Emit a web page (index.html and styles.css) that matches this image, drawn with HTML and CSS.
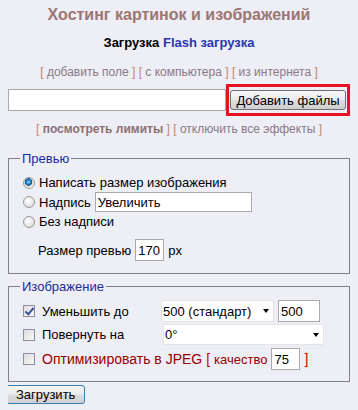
FILE: index.html
```html
<!DOCTYPE html>
<html lang="ru">
<head>
  <meta charset="UTF-8">
  <title>Хостинг картинок и изображений</title>
  <link rel="stylesheet" href="styles.css">
</head>
<body>
  <h1 class="title">Хостинг картинок и изображений</h1>

  <!-- вкладки -->
  <div class="tabs">
    <span class="tab-current">Загрузка</span>
    <a href="#" class="tab">Flash загрузка</a>
  </div>

  <div class="links">
    <span class="br">[</span> <a href="#">добавить поле</a> <span class="br">]</span>
    <span class="br">[</span> <a href="#">с компьютера</a> <span class="br">]</span>
    <span class="br">[</span> <a href="#">из интернета</a> <span class="br">]</span>
  </div>

  <div class="file-row">
    <input type="text" class="file-input">
    <span class="highlight"><button type="button" class="btn">Добавить файлы</button></span>
  </div>

  <div class="links links-second">
    <span class="br">[</span> <a href="#" class="strong">посмотреть лимиты</a> <span class="br">]</span>
    <span class="br">[</span> <a href="#">отключить все эффекты</a> <span class="br">]</span>
  </div>

  <!-- превью -->
  <fieldset class="group group-preview">
    <legend>Превью</legend>
    <label class="row row-first"><input type="radio" name="preview" class="radio" checked>Написать размер изображения</label>
    <label class="row row-input"><input type="radio" name="preview" class="radio">Надпись <input type="text" class="text-field caption-field" value="Увеличить"></label>
    <label class="row"><input type="radio" name="preview" class="radio">Без надписи</label>
    <div class="row size-row">Размер превью <input type="text" class="text-field small-field" value="170"> px</div>
  </fieldset>

  <!-- изображение -->
  <fieldset class="group group-image">
    <legend>Изображение</legend>
    <div class="opt-row opt-first">
      <input type="checkbox" class="check" checked>
      <span class="opt-label">Уменьшить до</span>
      <span class="select"><select><option>500 (стандарт)</option></select></span>
      <input type="text" class="text-field width-field" value="500">
    </div>
    <div class="opt-row opt-second">
      <input type="checkbox" class="check">
      <span class="opt-label">Повернуть на</span>
      <span class="select select-wide"><select><option>0°</option></select></span>
    </div>
    <div class="opt-row opt-third">
      <input type="checkbox" class="check">
      <span class="opt-red">Оптимизировать в JPEG</span>
      <span class="red-br">[</span>
      <span class="quality">качество</span>
      <input type="text" class="text-field small-field" value="75">
      <span class="red-br">]</span>
    </div>
  </fieldset>

  <button type="button" class="btn btn-submit">Загрузить</button>
</body>
</html>
```

FILE: styles.css
```css
body {
  margin: 8px;
  background: #eeeef7;
  font-family: "Liberation Sans", Arial, sans-serif;
  font-size: 13px;
  color: #000;
}

/* шапка */
.title {
  margin: 0;
  font-size: 16px;
  line-height: 14px;
  text-align: center;
  color: #9b7672;
}
.tabs {
  margin-top: 13px;
  text-align: center;
  font-weight: bold;
  font-size: 13px;
  line-height: 16px;
}
.tabs .tab {
  color: #2b36b0;
  text-decoration: none;
}
.links {
  margin-top: 14px;
  text-align: center;
  font-size: 12px;
  line-height: 15px;
  color: #887a84;
}
.links a {
  color: #887a84;
  text-decoration: none;
}
.links .br {
  color: #c0896a;
}
.links .strong {
  font-weight: bold;
  color: #8a7070;
}
.links-second {
  margin-top: 6px;
}

/* строка выбора файла */
.file-row {
  display: flex;
  align-items: center;
  margin-top: 4px;
}
.file-input {
  width: 220px;
  height: 22px;
  box-sizing: border-box;
  margin: 0;
  padding: 0 3px;
  border: 1px solid #a9a9a9;
  background: #fff;
}
.highlight {
  display: flex;
  padding: 3px 1px;
  border: 3px solid #e8141c;
}
.btn {
  height: 20px;
  margin: 0;
  padding: 0 7px;
  border: 1px solid #707070;
  border-radius: 3px;
  background: linear-gradient(#f7f7f7, #ebebeb 48%, #dddddd 52%, #cfcfcf);
  font: 13px "Liberation Sans", Arial, sans-serif;
  color: #000;
  white-space: nowrap;
}
.highlight .btn {
  width: 116px;
  padding: 0 2px;
}

/* группы */
.group {
  margin: 0;
  padding: 0 14px 12px 14px;
  border: 1px solid #808080;
}
.group legend {
  padding: 0 2px;
  margin-left: -3px;
  font-size: 13px;
  line-height: 15px;
  color: #1d2b96;
}
.group-preview {
  margin-top: 14px;
}
.group-image {
  margin-top: 5px;
  padding-bottom: 11px;
}

.row {
  display: flex;
  align-items: center;
  height: 19px;
}
.row-first {
  margin-top: 7px;
}
.row-input {
  height: 20px;
}
.size-row {
  height: 22px;
  margin-top: 8px;
  padding-left: 15px;
}

.radio {
  appearance: none;
  width: 12px;
  height: 12px;
  margin: 0 4px 0 0;
  border: 1px solid #9a9a9a;
  border-radius: 50%;
  background: radial-gradient(circle at 40% 35%, #ffffff, #e4e4e4 60%, #cfcfcf);
  box-sizing: border-box;
}
.radio:checked {
  background: radial-gradient(circle at 45% 40%, #8fd0ff 0, #2c8ad4 2px, #0d4f8f 3.5px, #dcdcdc 4px, #f4f4f4 6px);
}

.text-field {
  height: 21px;
  box-sizing: border-box;
  margin: 0 4px;
  padding: 0 2px;
  border: 1px solid #a9a9a9;
  background: #fff;
  font: 13px "Liberation Sans", Arial, sans-serif;
  color: #000;
}
.caption-field {
  width: 157px;
  height: 20px;
}
.small-field {
  width: 29px;
  height: 22px;
}

/* параметры изображения */
.opt-row {
  display: flex;
  align-items: center;
}
.opt-first {
  height: 22px;
  margin-top: 6px;
}
.opt-second {
  height: 21px;
  margin-top: 2px;
}
.opt-third {
  height: 22px;
  margin-top: 3px;
}
.check {
  appearance: none;
  position: relative;
  width: 12px;
  height: 12px;
  margin: 0 7px 0 0;
  border: 1px solid #8f8f9f;
  background: linear-gradient(135deg, #dcdcdc, #f8f8f8);
  box-sizing: border-box;
}
.check:checked::after {
  content: "";
  position: absolute;
  left: 3px;
  top: 0;
  width: 3px;
  height: 7px;
  border: solid #3f4f9f;
  border-width: 0 2px 2px 0;
  transform: rotate(40deg);
}
.opt-label {
  width: 119px;
}
.select {
  position: relative;
  display: inline-block;
}
.select select {
  appearance: none;
  width: 113px;
  height: 22px;
  margin: 0;
  padding: 0 1px;
  border: 1px solid #e4e4e4;
  border-radius: 2px;
  background: #fff;
  font: 13px "Liberation Sans", Arial, sans-serif;
  color: #000;
}
.select::after {
  content: "";
  position: absolute;
  right: 5px;
  top: 9px;
  border-left: 3px solid transparent;
  border-right: 3px solid transparent;
  border-top: 4px solid #000;
}
.select-wide {
  margin-left: 2px;
}
.select-wide select {
  width: 161px;
  height: 21px;
}
.width-field {
  width: 42px;
  height: 22px;
}
.opt-red {
  color: #990000;
  font-size: 14px;
}
.red-br {
  margin-left: 4px;
  color: #cc0000;
  font-size: 14px;
}
.quality {
  margin-left: 4px;
  font-size: 13px;
  color: #990000;
}
.opt-third .small-field {
  margin: 0 0 0 4px;
}

.btn-submit {
  display: block;
  margin: 3px 0 0 -2px;
  height: 19px;
  padding: 0 9px;
  border-color: #3c7fb1;
}
```
